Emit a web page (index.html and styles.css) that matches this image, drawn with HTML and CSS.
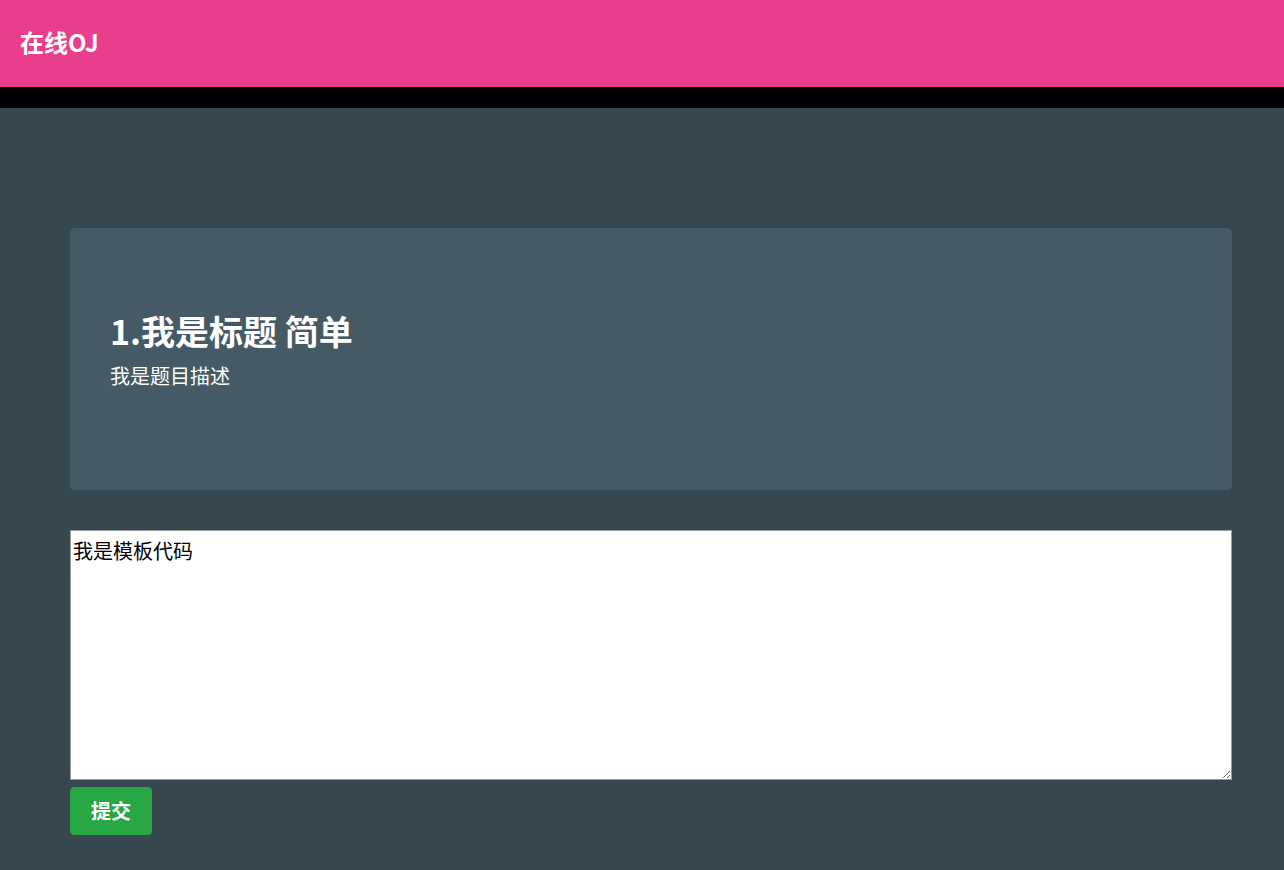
FILE: index.html
```html
<!DOCTYPE html>
<html lang="zh">
<head>
<meta charset="utf-8">
<title>在线OJ</title>
<link rel="stylesheet" href="styles.css">
</head>
<body>
<header class="topbar">
  <div class="brand">在线OJ</div>
</header>
<div class="strip"></div>
<main class="main">
  <section class="card">
    <h1 class="title">1.我是标题 简单</h1>
    <p class="desc">我是题目描述</p>
  </section>
  <textarea class="code">我是模板代码</textarea>
  <button class="submit">提交</button>
</main>
</body>
</html>
```
FILE: styles.css
```css
html, body {
  margin: 0;
  padding: 0;
}
body {
  background: #37474f;
  font-family: "Noto Sans CJK SC", "Noto Sans", sans-serif;
  min-height: 870px;
  color: #fff;
}
.topbar {
  height: 87px;
  background: #e83e8c;
  display: flex;
  align-items: center;
  padding-left: 20px;
  box-sizing: border-box;
}
.brand {
  font-size: 24px;
  font-weight: 700;
  color: #fff;
  margin-top: -4px;
}
.strip {
  height: 21px;
  background: #000;
}
.main {
  padding: 120px 52px 20px 70px;
  display: flex;
  flex-direction: column;
  align-items: flex-start;
}
.card {
  box-sizing: border-box;
  width: 100%;
  height: 262px;
  background: #455a64;
  border-radius: 5px;
  padding: 0 40px 13px;
  display: flex;
  flex-direction: column;
  justify-content: center;
}
.title {
  margin: 0;
  font-size: 34px;
  font-weight: 700;
  line-height: 44px;
  margin-top: -6px;
}
.desc {
  margin: 9px 0 0;
  font-size: 20px;
  line-height: 28px;
}
.code {
  display: block;
  box-sizing: border-box;
  width: 100%;
  height: 250px;
  margin-top: 40px;
  border: 1px solid #9a9a9a;
  padding: 4px 2px 2px;
  font-family: "Noto Sans CJK SC", sans-serif;
  font-size: 20px;
  line-height: 32px;
  color: #000;
  background: #fff;
}
.submit {
  margin-top: 7px;
  background: #28a745;
  color: #fff;
  border: 1px solid #28a745;
  border-radius: 4px;
  font-family: "Noto Sans CJK SC", sans-serif;
  font-size: 20px;
  font-weight: 700;
  line-height: 30px;
  padding: 8px 20px;
}
```
